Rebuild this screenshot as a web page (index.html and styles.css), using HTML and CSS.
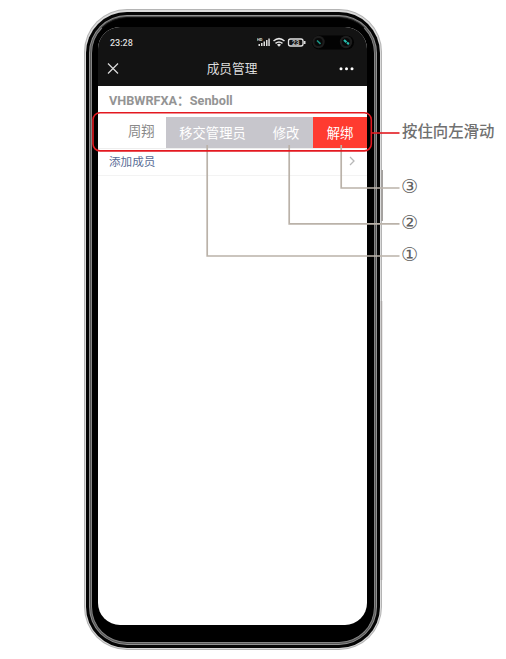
FILE: index.html
```html
<!DOCTYPE html>
<html lang="zh-CN">
<head>
<meta charset="utf-8">
<title>成员管理</title>
<link rel="stylesheet" href="styles.css">
</head>
<body>
<main class="stage">
  <div class="rim"><div class="shine"><div class="edge"><div class="metal"><div class="groove"><div class="bezel">
    <div class="screen">
      <header class="top">
        <div class="status">
          <span class="time">23:28</span>
          <svg class="sys" width="100" height="18" viewBox="0 0 100 18">
            <rect x="55" y="1.500" width="42" height="14" rx="7" fill="#030303"/>
            <g fill="#ddd">
              <rect x="1.500" y="10" width="1.500" height="2"/><rect x="4" y="9" width="1.500" height="3"/><rect x="6.500" y="7.500" width="1.500" height="4.500"/><rect x="9" y="6" width="1.500" height="6"/><rect x="11.300" y="4.500" width="1.500" height="7.500"/>
            </g>
            <text x="0" y="7" class="hd">HD</text>
            <g fill="none" stroke="#e4e4e4" stroke-width="1.500">
              <path d="M16.500 7Q22 2.200 27.500 7M18.500 9.300Q22 6.500 25.500 9.300"/>
              <path d="M20 10.700L22 12.700L24 10.700Q22 9 20 10.700Z" fill="#e4e4e4" stroke="none"/>
              <rect x="31.500" y="5" width="14.500" height="7" rx="2" stroke-width="1.300"/>
            </g>
            <rect x="46.700" y="7" width="1.800" height="3" fill="#ddd"/>
            <text x="35" y="10.800" class="pct">23</text>
            <circle cx="61.500" cy="8" r="6.200" fill="#1d1d1d"/><circle cx="61.500" cy="8" r="4" fill="#080808"/>
            <path d="M60 6.500L63.500 9.800" stroke="#1c9485" stroke-width="1.600"/>
            <circle cx="89" cy="8" r="6.200" fill="#1d1d1d"/><circle cx="89" cy="8" r="4" fill="#080808"/>
            <path d="M87 6L89.500 8.300M90 8.800L92 10" stroke="#25bdae" stroke-width="2.200"/>
          </svg>
        </div>
        <div class="nav">
          <svg width="12" height="12" viewBox="0 0 12 12"><path d="M1 .5L11 10.500M11 .5L1 10.500" stroke="#ddd" stroke-width="1.200"/></svg>
          <h1>成员管理</h1>
          <svg width="15" height="4" viewBox="0 0 15 4" fill="#fff"><circle cx="2" cy="1.700" r="1.500"/><circle cx="7.500" cy="1.700" r="1.500"/><circle cx="13" cy="1.700" r="1.500"/></svg>
        </div>
      </header>
      <h2 class="group">VHBWRFXA：Senboll</h2>
      <div class="member">
        <span class="name">周翔</span>
        <span class="action transfer">移交管理员</span>
        <span class="action edit">修改</span>
        <span class="action unbind">解绑</span>
      </div>
      <div class="add"><span>添加成员</span>
        <svg width="6" height="10" viewBox="0 0 6 10"><path d="M1 1L5 5L1 9" fill="none" stroke="#b8b8b8" stroke-width="1.300"/></svg>
      </div>
    </div>
  </div></div></div></div></div></div>
  <aside class="notes">
    <p class="hint">按住向左滑动</p>
    <p class="num n3">③</p>
    <p class="num n2">②</p>
    <p class="num n1">①</p>
  </aside>
  <svg class="callouts" width="506" height="659" viewBox="0 0 506 659" fill="none">
    <path d="M382 170V221" stroke="#a5a2a0" stroke-width="2"/>
    <path d="M381.500 301V580" stroke="#aaa7a6" stroke-width="1.500"/>
    <g stroke="#bab2a9" stroke-width="1.700">
      <path d="M341.200 145V188H399.500"/><path d="M289.200 145V223.800H399.500"/><path d="M207.200 145V256H399.500"/>
    </g>
    <g stroke="#e31920" stroke-width="1.600">
      <rect x="93" y="112.700" width="278.300" height="38.200" rx="7"/><path d="M371.500 133H399.500"/>
    </g>
  </svg>
</main>
</body>
</html>
```
FILE: styles.css
```css
* { box-sizing: border-box; }
body { margin: 0; background: #fff; font-family: Roboto, "Noto Sans CJK SC", sans-serif; }
h1, h2, p { margin: 0; font-weight: 400; }
.stage { position: relative; display: flex; width: 506px; height: 659px; padding: 9px 0 0 84px; overflow: hidden; }
.rim { flex: none; width: 298px; height: 641px; padding: 1px; border-radius: 43px; background: #b4b4b4; }
.shine { height: 100%; padding: 2px 1px 1px; border-radius: 42px; background: #dcdcdc; }
.edge { height: 100%; padding: 3px; border-radius: 41px; background: #050505; }
.metal { height: 100%; padding: 1px; border-radius: 38px; background: #929292; }
.groove { height: 100%; padding: 1px; border-radius: 37px; background: #555; }
.bezel { height: 100%; padding: 9px 7px 17px 6px; border-radius: 36px; background: #000; border: 1px solid #858585; border-top-color: #111; }
.screen { height: 100%; background: #fff; border-radius: 22px; overflow: hidden; }
.top { height: 59px; background: #131313; color: #ddd; }
.status { display: flex; height: 30px; padding: 7px 10px 0 12px; justify-content: space-between; }
.time { font-size: 9px; line-height: 18px; font-weight: 500; }
.sys { flex: none; }
.hd { font: 700 4px Roboto, sans-serif; fill: #ddd; }
.pct { font: 700 6.500px Roboto, sans-serif; fill: #bbb; }
.nav { display: flex; height: 24px; padding: 0 13px 0 9px; align-items: center; justify-content: space-between; }
.nav h1 { padding-left: 6px; font-size: 12.700px; line-height: 20px; }
.group { height: 28px; padding-left: 11px; font-size: 12.700px; line-height: 29px; font-weight: 700; color: #949494; white-space: nowrap; }
.member { display: flex; height: 35px; padding-top: 3px; font-size: 13.300px; line-height: 31px; color: #8a8a8a; border-bottom: 1px solid #eee; }
.name { width: 68px; padding-left: 30px; line-height: 29px; }
.action { height: 31px; background: #c7c6cc; color: #fff; line-height: 33px; text-align: center; }
.transfer { width: 93px; }
.edit { width: 54px; }
.unbind { flex: 1; background: #ff3b30; }
.add { display: flex; height: 27px; padding: 0 12px 2px 11px; align-items: center; justify-content: space-between; font-size: 11.600px; color: #576b95; border-bottom: 1px solid #f3f3f3; }
.notes { padding: 111px 0 0 19px; color: #707070; font-family: "Noto Sans CJK SC", sans-serif; }
.hint { padding-left: 1px; font-size: 15.400px; line-height: 20px; font-weight: 500; white-space: nowrap; }
.num { font-family: "DejaVu Sans", sans-serif; font-size: 19px; line-height: 20px; color: #606060; }
.n3 { margin-top: 36px; }
.n2 { margin-top: 16px; }
.n1 { margin-top: 12px; }
.callouts { position: absolute; left: 0; top: 0; pointer-events: none; }
```
